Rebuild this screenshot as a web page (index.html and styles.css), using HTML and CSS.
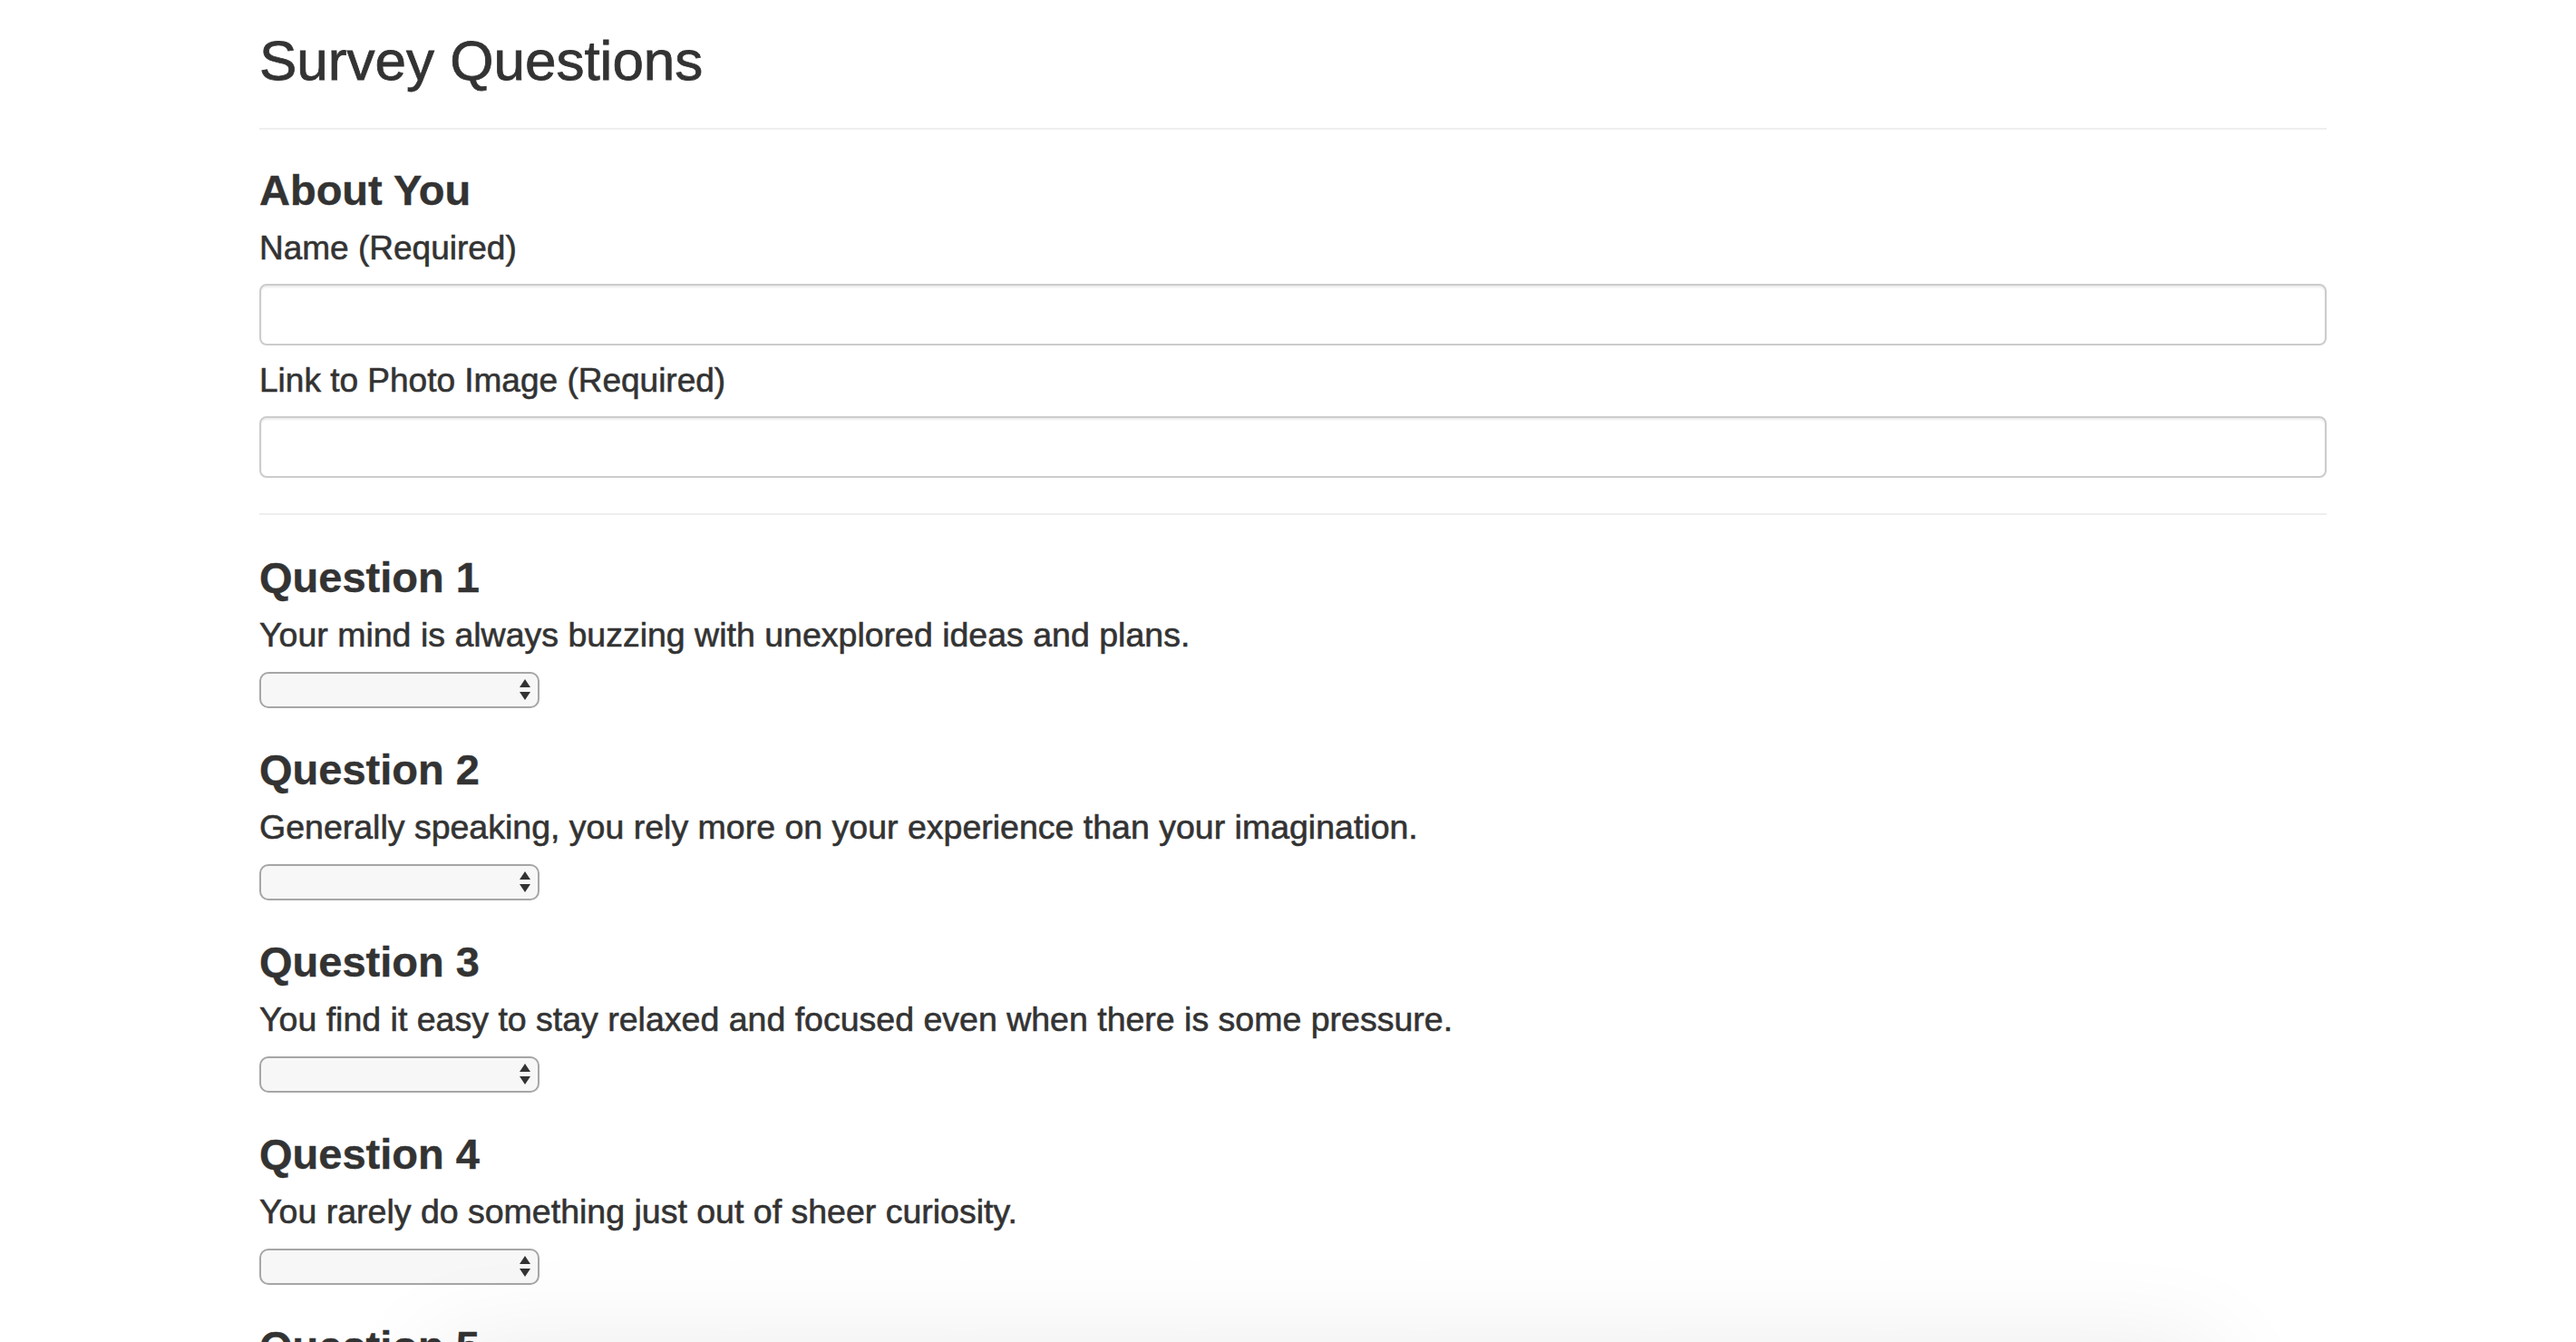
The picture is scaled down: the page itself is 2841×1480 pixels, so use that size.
FILE: index.html
```html
<!DOCTYPE html>
<html lang="en">
<head>
<meta charset="utf-8">
<title>Survey</title>
<link rel="stylesheet" href="styles.css">
</head>
<body>
<div class="container">
  <h2 class="title">Survey Questions</h2>
  <hr class="rule">
  <form class="survey">
    <section class="about">
      <h3 class="section-heading">About You</h3>
      <label class="field-label" for="name">Name (Required)</label>
      <input class="text-input" id="name" type="text">
      <label class="field-label" for="photo">Link to Photo Image (Required)</label>
      <input class="text-input" id="photo" type="text">
    </section>
    <hr class="rule rule-second">
    <section class="question">
      <h3 class="section-heading">Question 1</h3>
      <p class="question-text">Your mind is always buzzing with unexplored ideas and plans.</p>
      <div class="select-wrap"><select class="answer"><option></option></select><svg class="arrows" viewBox="0 0 14 24" width="14" height="24"><path d="M7 0 L13 9 L1 9 Z M1 14 L13 14 L7 23 Z" fill="#333"/></svg></div>
    </section>
    <section class="question">
      <h3 class="section-heading">Question 2</h3>
      <p class="question-text">Generally speaking, you rely more on your experience than your imagination.</p>
      <div class="select-wrap"><select class="answer"><option></option></select><svg class="arrows" viewBox="0 0 14 24" width="14" height="24"><path d="M7 0 L13 9 L1 9 Z M1 14 L13 14 L7 23 Z" fill="#333"/></svg></div>
    </section>
    <section class="question">
      <h3 class="section-heading">Question 3</h3>
      <p class="question-text">You find it easy to stay relaxed and focused even when there is some pressure.</p>
      <div class="select-wrap"><select class="answer"><option></option></select><svg class="arrows" viewBox="0 0 14 24" width="14" height="24"><path d="M7 0 L13 9 L1 9 Z M1 14 L13 14 L7 23 Z" fill="#333"/></svg></div>
    </section>
    <section class="question">
      <h3 class="section-heading">Question 4</h3>
      <p class="question-text">You rarely do something just out of sheer curiosity.</p>
      <div class="select-wrap"><select class="answer"><option></option></select><svg class="arrows" viewBox="0 0 14 24" width="14" height="24"><path d="M7 0 L13 9 L1 9 Z M1 14 L13 14 L7 23 Z" fill="#333"/></svg></div>
    </section>
    <section class="question">
      <h3 class="section-heading">Question 5</h3>
      <p class="question-text">&nbsp;</p>
    </section>
  </form>
</div>
<div class="bottom-sheet"></div>
</body>
</html>
```

FILE: styles.css
```css
html, body {
  margin: 0;
  padding: 0;
  background: #fff;
  overflow: hidden;
}

body {
  font-family: "Liberation Sans", Arial, Helvetica, sans-serif;
  color: #333;
}

.container {
  width: 2280px;
  margin-left: 286px;
  padding-top: 34px;
}

.title {
  margin: 0;
  font-size: 62px;
  line-height: 66px;
  font-weight: 400;
  -webkit-text-stroke: 0.8px #333;
}

.rule {
  margin: 41px 0 0;
  border: 0;
  border-top: 2px solid #eee;
  height: 0;
}

.rule-second {
  margin-top: 39px;
}

.survey {
  display: flex;
  flex-direction: column;
}

.about {
  display: flex;
  flex-direction: column;
  padding-top: 41px;
}

.section-heading {
  margin: 0;
  font-size: 47px;
  line-height: 52px;
  font-weight: 700;
  -webkit-text-stroke: 0.4px #333;
}

.field-label {
  display: block;
  font-size: 37px;
  line-height: 40px;
  margin-top: 18px;
  -webkit-text-stroke: 0.6px #333;
}

.about .field-label + .text-input {
  margin-top: 19px;
}

.about .text-input + .field-label {
  margin-top: 19px;
}

.text-input {
  box-sizing: border-box;
  width: 100%;
  height: 68px;
  border: 2px solid #ccc;
  border-radius: 8px;
  box-shadow: inset 0 2px 2px rgba(0, 0, 0, 0.075);
  background: #fff;
  padding: 0 24px;
  font-size: 28px;
  font-family: inherit;
}

.question {
  display: flex;
  flex-direction: column;
  align-items: flex-start;
  padding-top: 43px;
}

.question + .question {
  padding-top: 42px;
}

.question-text {
  margin: 17px 0 0;
  font-size: 37.5px;
  line-height: 40px;
  -webkit-text-stroke: 0.6px #333;
}

.select-wrap {
  position: relative;
  margin-top: 21px;
  width: 309px;
  height: 40px;
}

.answer {
  -webkit-appearance: none;
  appearance: none;
  box-sizing: border-box;
  width: 309px;
  height: 40px;
  border: 2px solid #a6a6a6;
  border-radius: 10px;
  background: #f7f7f7;
  margin: 0;
  padding: 0 12px;
  font-size: 24px;
  font-family: inherit;
}

.arrows {
  position: absolute;
  right: 9px;
  top: 8px;
  pointer-events: none;
}

.bottom-sheet {
  position: fixed;
  left: 520px;
  width: 1880px;
  top: 1530px;
  height: 200px;
  background: #fff;
  box-shadow: 0 0 120px 40px rgba(0, 0, 0, 0.09);
}
```
